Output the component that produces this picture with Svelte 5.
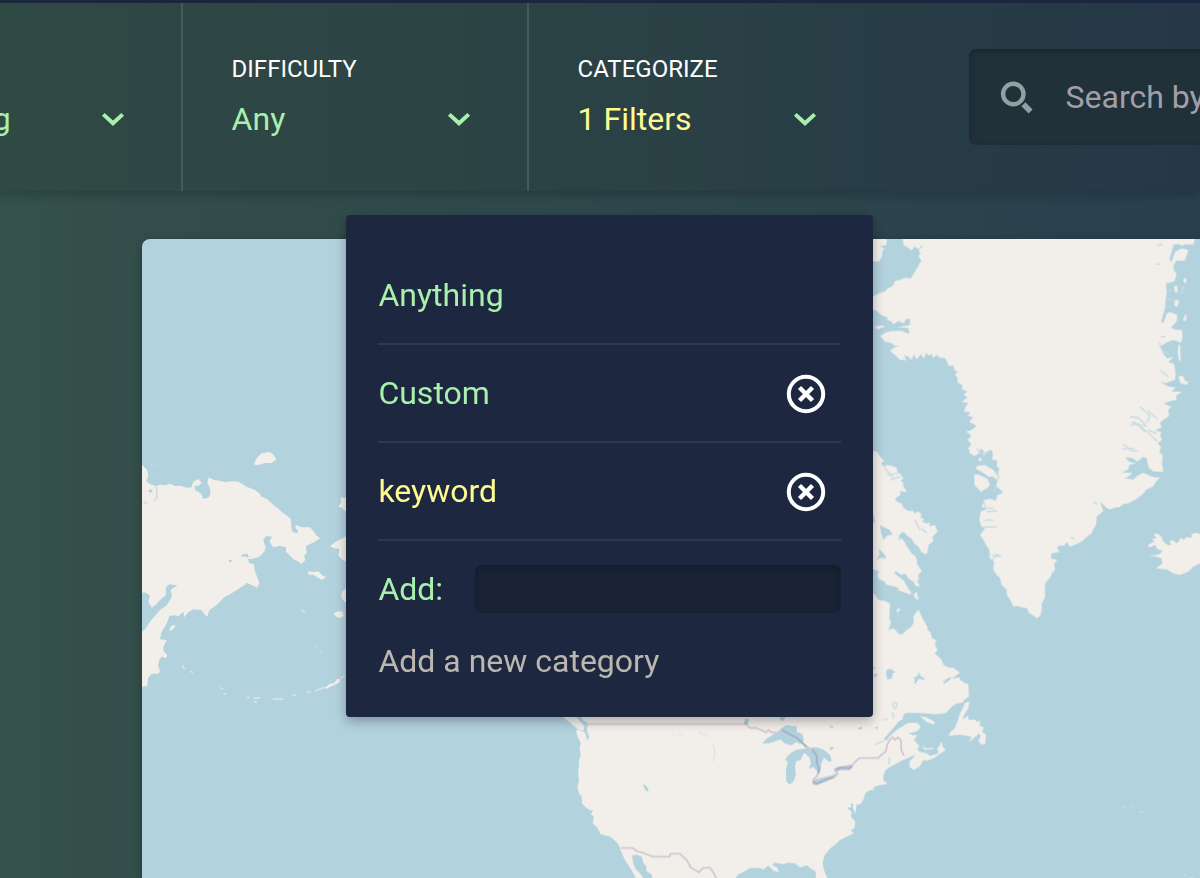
<script>
  const filters = [
    { label: '', value: 'Anything', active: false },
    { label: 'Difficulty', value: 'Any', active: false },
    { label: 'Categorize', value: '1 Filters', active: true }
  ];
  const categories = [
    { name: 'Anything', removable: false, active: false },
    { name: 'Custom', removable: true, active: false },
    { name: 'keyword', removable: true, active: true }
  ];
  let draft = $state('');
</script>

<div class="page">
  <div class="topline"></div>
  <header>
    {#each filters as f}
      <div class="filter">
        <div class="label">{f.label}</div>
        <div class="value" class:active={f.active}>
          <span>{f.value}</span>
          <svg class="chevron" width="24" height="16" viewBox="0 0 24 16"><path d="M2.3 2.4 12 11.3l9.7-8.9" /></svg>
        </div>
      </div>
    {/each}
    <div class="search">
      <svg width="34" height="34" viewBox="0 0 34 34">
        <circle cx="13.3" cy="13" r="10.2" />
        <path d="m23.4 23.3 7.2 7.2" />
      </svg>
      <span>Search by</span>
    </div>
  </header>

  <main>
    <svg class="map" width="1058" height="639" viewBox="142 239 1058 639">
      <rect class="sea" x="142" y="239" width="1058" height="639" />
      <g class="soft">
        <!-- Chukotka, Kamchatka and the Aleutians -->
        <g transform="translate(130 430) scale(.33333)">
          <path class="land" d="M30 98 40 108 52 120 55 140 48 152 60 163 78 168 90 164 105 166 120 161 135 168 150 167 165 172 183 173 190 155 205 147 215 158 205 168 194 167 195 180 212 190 220 207 235 203 242 192 240 175 232 160 236 142 252 150 270 152 285 157 305 154 325 155 350 170 375 180 388 190 395 200 412 208 430 225 445 236 460 250 470 256 483 268 484 290 487 305 500 310 505 303 496 294 498 285 515 292 540 292 553 307 558 315 570 325 557 334 545 340 528 348 530 370 522 378 526 390 515 401 500 392 490 388 478 375 468 365 468 352 450 347 430 352 418 335 426 320 410 318 400 328 402 338 407 350 404 363 395 374 385 382 368 386 354 388 358 400 372 402 374 420 378 432 388 458 382 473 370 467 350 458 345 464 320 480 300 493 285 500 260 525 238 540 232 560 222 551 215 540 190 538 175 546 163 562 160 545 145 559 133 556 118 558 112 575 105 590 95 605 90 628 110 630 100 650 100 662 112 676 108 685 95 680 88 690 84 706 90 722 85 731 65 731 54 744 52 768 30 772V610L45 598 60 575 90 540 110 526 126 500 122 480 142 466 118 463 108 472 107 497 92 508 80 522 65 533 55 515 60 497 48 488 30 487Z" />
          <path class="land" d="M372 100 380 85 395 70 418 66 432 76 439 88 425 99 405 99 390 104 376 105ZM534 424l18 2 14-2 10 12 12 4-12 10-14-8-12-8-14 1zM652 203h-20l2 14-9 12 12 6 8 8h8zM652 314l-12 10-18 8-22 17 14 6 14 2-3 20 16 15h12zM650 472l-14 14-2 14 10 16 8 4zM612 550l12-6 14 1 3 12-12 7-13-6zM117 600l8-13 8-3 3 7-9 8-7 3zM586 774l12-12 14-2 10-14 8 2-2 10-18 8-12 6-10 6z" />
          <path class="faint" d="M157 706l7 12M269 773l11 4M180 723l9 5M281 789l8 5M348 803h10M370 805l20-2M372 814l9 2M428 808l14-2 17 2M488 795l10 1M530 788l12-5M556 782l14-5M570 778l16-7M632 745l12-8M514 540l11 6" />
          <path class="speck" d="M557 647l4 4M570 663l5 3M62 104l5 4M78 106l5 3M470 77l4 2" />
          <path class="water" d="M54 183l8-6 6 7-5 4zM332 380l8-9 14 2 2 12-12-6zM296 389h9v7h-8z" />
          <path class="thinwater" d="M40 216l12 4M72 212l8-8 1-25-6-11" />
        </g>
        <!-- Greenland, Baffin Island, Labrador and Iceland -->
        <g transform="translate(860 230) scale(.33333)">
          <path class="land" d="M128 20 130 45 145 54 155 61 163 50 178 58 184 44 187 50 176 62 181 72 175 78 184 92 172 112 163 127 152 145 135 143 120 150 105 153 98 168 82 176 75 184 60 188 50 194 35 200V238L50 242 65 256 85 263 80 270 95 274 100 283 115 273 133 280 136 268 150 266 150 285 128 289 110 292 145 294 148 312 125 303 95 303 78 307 60 318 75 335 92 338 105 348 120 348 102 352 90 362 108 378 120 390 135 389 142 398 133 376 144 379 154 390 162 374 170 389 183 372 190 386 200 368 205 376 215 372 220 384 230 374 240 384 254 384 263 397 265 408 280 406 283 420 293 425 284 434 292 442 293 458 307 465 306 478 322 484 310 494 322 502 304 516 325 518 317 530 312 546 330 546 324 558 340 561 327 575 350 588 335 600 318 604 334 617 323 630 334 642 325 654 330 670 345 678 356 670 362 655 371 662 371 680 380 665 394 660 399 675 395 688 412 692 410 708 418 716 412 736 400 720 375 705 352 707 346 716 358 722 372 730 385 740 400 740 413 752 408 768 420 778 430 788 412 795 408 812 390 806 372 810 365 830 380 838 362 844 358 870 364 890 375 895 360 915 370 930 378 945 388 960 390 985 402 995 400 1020 410 1035 419 1042 425 1065 440 1080 440 1095 450 1108 460 1130 472 1128 490 1133 500 1134 508 1150 518 1155 530 1165 540 1158 545 1142 545 1120 555 1102 555 1060 572 1040 575 1030 585 1020 583 1000 592 990 572 985 575 970 598 966 590 950 604 946 612 948 620 936 630 950 655 940 668 932 684 918 696 908 700 897 708 885 710 860 730 843 720 815 740 834 750 838 765 832 777 832 790 822 805 820 825 810 846 795 858 780 878 770 890 752 902 742 885 742 870 738 850 728 832 737 820 748 795 745 812 735 815 728 785 727 805 718 808 705 828 700 808 695 795 682 816 684 832 694 849 681 860 685 865 710 872 718 880 724 910 725 906 698 908 678 898 665 903 650 893 640 906 630 900 615 906 608 885 600 905 593 900 578 916 565 928 558 924 540 934 530 910 520 935 512 950 510 948 498 966 485 935 485 947 472 928 470 908 462 945 450 947 430 942 400 925 397 940 380 920 385 910 372 900 350 920 337 940 330 963 338 968 320 965 300 948 300 932 292 950 275 952 255 930 246 920 250 912 276 903 278 908 258 915 235 917 210 920 190 918 160 943 154 950 130 942 122 940 110 948 92 975 92 985 60 965 55 945 66 935 95 928 90 940 45 955 42 966 46 975 43 1000 43 1004 28 1010 20Z" />
          <path class="land" d="M342 733l12 0 16 8 12 4 8 20-10 10-18 10-10-12-8-6zM354 690l4-6 9 2-4 8zM35 20h32l14 10-3 16-18 1 13 10-7 10 1 10-10 17-22 0zM42 289l25-3 10 4-12 3-11 5zM970 150l6-8 3 3-1 14-6-1zM942 168l10 0 1 19-8 0zM968 272l8-19 4 4-2 16zM945 208l12 5-5 18-9-3zM955 345l5 0 2 40-3 14-6-30zM955 440l10-4 8 8 2 10 9-2-2 12-20-3z" />
          <path class="speck" d="M971 168l-8 26" />
          <path class="land" d="M35 662 50 664 60 680 72 693 63 700 78 716 76 705 90 706 110 713 112 725 122 733 130 745 122 752 131 760 128 765 140 785 120 783 122 795 105 805 110 815 125 820 130 833 145 843 160 842 161 850 177 844 185 856 180 862 192 866 187 875 200 880 210 878 208 889 225 885 233 905 217 920 220 933 206 945 202 968 195 973 183 964 175 950 163 941 155 925 145 920 132 908 130 930 138 945 155 970 165 978 172 991 170 1000 186 1024 174 1035 177 1045 172 1054 180 1070 168 1068 160 1055 145 1045 135 1030 125 1035 105 1022 105 1032 130 1050 145 1075 152 1088 142 1090 124 1081 108 1070 80 1065 75 1055 57 1048 52 1035 57 1024 45 1020 35 1015ZM162 1092l8-6 5 20-3 4-10-10zM110 1138l8-4 2 6-8 9zM110 1080l30-8 12 12 0 10-16-6z" />
          <path class="water" d="M60 885l14 8 15 7 9 14-16 2-12 14-6-20zM56 955l20 22 2 10-14-5-14 8 8-16zM129 905l8 5-7 22-8-8-7 10 3-20zM35 835l10 40-10 10z" />
          <path class="land" d="M-50 1070 35 1085 45 1095 55 1110 75 1113 90 1120 88 1170 94 1175 85 1200 98 1195 107 1200 113 1210 125 1214 140 1200 155 1190 161 1175 160 1160 170 1145 175 1138 190 1170 202 1190 203 1200 212 1208 216 1225 228 1230 225 1245 233 1260 224 1270 235 1280 245 1290 250 1305 265 1312 280 1313 300 1328 275 1345 300 1342 300 1350 312 1358 325 1362 327 1400 314 1408 308 1418 290 1420 275 1430 258 1449 225 1453 205 1450 140 1448 130 1455 128 1467 115 1476 95 1500 85 1510 70 1530 80 1531 90 1518 110 1500 140 1481 155 1477 175 1480 182 1492 170 1504 157 1508 143 1507 160 1516 172 1513 162 1530 178 1548 172 1558 178 1565 200 1570 210 1578 235 1570 232 1556 245 1534 248 1550 257 1560 245 1568 220 1585 200 1592 190 1590 180 1608 162 1620 150 1612 148 1595 165 1578 165 1575 130 1590 110 1600 95 1608 78 1618 70 1635 70 1650 82 1662 50 1668 35 1672 45 1680 20 1680 13 1695 10 1710 0 1722 -50 1720Z" />
          <path class="land" d="M316 1418 328 1414 325 1435 312 1455 308 1468 326 1456 324 1470 345 1468 350 1476 362 1472 358 1486 372 1492 366 1505 378 1515 376 1540 366 1544 355 1534 361 1520 358 1510 340 1525 325 1538 335 1520 300 1514 265 1518 272 1504 284 1495 292 1475 300 1450ZM180 1458l20 4 24 14-2 8-22-8zM186 1546l12 9 22-3-2 5-24 3z" />
          <path class="water" d="M78 1330l2-10 12-4 14 12-8 1-2 16-14 3zM160 1343l12-4 4-13 6 13 9 3 3 8-18-4-9 14-6-2 5-8zM250 1355l15-11 10-2-8 10-16 10zM40 1310h5v7h-5zM41 1332h10v7H41zM43 1491h12l-4 8zM0 1490h7v6H0z" />
          <path class="thinwater" d="M98 1424l4-8 8 4-1 12-6 4zM98 1446l2 18M70 1470l12-3M40 1545l30-12M87 1582v22M920 182l15-2M920 208h15M922 232l12-5" />
          <path class="land" d="M1025 915 1008 908 995 912 996 922 978 922 970 930 962 922 953 940 935 930 928 935 935 945 922 945 910 935 905 922 893 910 880 913 890 925 875 925 883 935 865 943 866 953 885 945 893 958 908 962 900 972 868 978 890 980 905 985 907 1000 888 1015 920 1018 940 1030 960 1035 985 1025 1000 1010 1025 998Z" />
          <path class="thinwater" d="M893 47l15-5M888 102l13 1M898 338l8 22 22 15M915 320l-12 0M900 420l25 20M905 458l15 4M840 530l30 28-10 20M810 560l25 3 24 25M862 542l30 25M812 584l28-2M815 577l45 12M790 642l24 20 20 1M786 657l36-2M820 575l42 30 30 30M865 600l25 10M855 605l-15-14M350 655l12 15 27 0M375 835l-3-20M370 834h32M375 870h25M380 845l30-3M365 892l45-2M395 975l30 5M397 990l12-17 15 7M700 815l12 8M632 922l12 5M405 767l-2 20M415 750l-2-30M80 735l34-6M75 715l25 30M90 750l30-10M165 870l16 32M185 895l15 14" />
          <path class="speck" d="M746 1710l4 2M790 1732h10M810 1728h7M836 1746l14-1M986 1852l4 4M970 1933l8 4M990 1945l9-6" />
        </g>
        <!-- United States and northern Mexico -->
        <g transform="translate(550 700) scale(.33333)">
          <path class="land" d="M85 40 100 62 115 70 110 88 118 110 112 120 104 97 90 90 78 90 82 107 92 130 89 145 92 165 87 182 86 205 84 218 87 245 82 258 86 280 95 289 96 310 105 320 118 330 130 332 122 342 132 350 128 370 142 383 152 402 180 410 193 420 205 433 213 453 225 480 240 503 250 520 262 543H287L270 520 257 507 250 490 246 467 260 464 275 470 280 488 290 500 288 512 305 524 310 545H550L565 523 582 515 600 504 632 504 640 509 655 497 672 513 687 516 682 503 666 495 675 488 700 493 715 488 735 490 750 503 770 496 785 507 797 515 798 545H836L822 510 818 488 824 465 840 446 860 430 868 421 890 410 912 400 902 390 913 385 916 365 903 350 905 335 890 322 905 322 901 307 910 299 909 325 916 342 920 312 930 312 940 295 945 280 975 260V40Z" />
          <path class="land" d="M36 48H78L103 80 101 92 85 89 60 68Z" />
          <path class="water" d="M636 131 650 116 666 105 680 98 697 82 712 75 728 78 740 78 740 95 758 103 762 122 750 132 740 126 723 136 703 129 692 118 668 126 655 130ZM705 178 722 159 740 149 755 147 780 143 800 142 823 150 840 165 845 182 838 186 822 172 814 190 812 212 802 216 792 201 776 206 783 190 779 173 762 158 752 180 738 184 735 205 738 222 732 242 720 254 709 245 708 207 714 186ZM788 240 810 234 845 226 857 220 861 226 830 244 798 256 787 252ZM850 211 870 200 900 194 910 201 900 210 870 211 856 216ZM278 253l8 2 10 13-2 7-8-5zM688 50h20l-8 13-10-4zM838 76l12 4 0 5-10-3zM924 84l12-4 0 7-10 1zM838 142l12-1 2 5-10 4zM585 55l14 4-10 18-8-5z" />
          <path class="thinwater pale" d="M368 108l6-2M383 104l12-1M445 95l22 13 12-1M489 135l6 25-5 25" />
          <path class="thinwater" d="M108 90l9 28M103 75l8 12" />
          <path class="border" d="M110 72H588L600 84 617 83 635 91 647 97 656 90 665 97 690 98 700 90 722 104 742 114 762 134 782 148 800 165 801 190 807 207 801 228 789 240 790 250 800 252 820 241 853 231 863 222 855 207 870 202 890 205 905 197 914 187 928 174H985L993 165 1007 155 1012 133 1021 117 1028 112 1035 119 1045 112 1053 122 1054 150 1062 167M212 444H248L260 453 280 459 310 470H358L362 461H390L410 480 422 502 447 517 460 503H480L492 520 500 540" />
          <path class="lakeborder" d="M584 68l8 3M697 91l45 23 28 27M787 148l13 20 1 22 6 17-1 14M790 246l10 5 25-11 28-9M857 209l15-7 25 3 8-8" />
        </g>
      </g>
    </svg>
  </main>

  <div class="menu">
    {#each categories as c}
      <div class="row" class:active={c.active}>
        <span>{c.name}</span>
        {#if c.removable}
          <svg width="40" height="40" viewBox="0 0 40 40">
            <circle cx="20" cy="20" r="17.2" />
            <path d="m13.5 13.5 13 13m0-13-13 13" />
          </svg>
        {/if}
      </div>
    {/each}
    <div class="add">
      <label for="category">Add:</label>
      <input id="category" bind:value={draft} />
    </div>
    <p>Add a new category</p>
  </div>
</div>

<style>
  :global(body) { margin: 0; overflow: hidden; }
  .page {
    position: relative;
    display: flex;
    flex-direction: column;
    width: 1200px;
    height: 878px;
    overflow: hidden;
    box-sizing: border-box;
    font-family: Roboto, sans-serif;
    font-size: 32px;
    color: #a8f0ab;
    background: linear-gradient(90deg, #34534c 0, #344e4a 8%, #2f494c 42%, #2c444c 72%, #28404e 100%);
  }
  .topline { height: 3px; flex: none; background: #1c2840; }
  header {
    position: relative;
    display: flex;
    flex: none;
    height: 188px;
    margin-left: -163px;
    background: linear-gradient(90deg, #304b43 0, #2f4844 20%, #2b4245 55%, #273c45 80%, #263848 100%);
    box-shadow: 0 4px 10px rgba(0, 0, 0, 0.2);
  }
  .filter {
    box-sizing: border-box;
    flex: none;
    width: 346px;
    padding: 48px 56px 0 48.6px;
    border-right: 2px solid #455a5a;
  }
  .filter:nth-child(3) { border-right-color: transparent; }
  .label {
    height: 36px;
    line-height: 36px;
    font-size: 24px;
    text-transform: uppercase;
    color: #fff;
  }
  .value {
    display: flex;
    align-items: center;
    justify-content: space-between;
    height: 48px;
    margin-top: 8px;
    line-height: 48px;
  }
  .value.active span, .row.active { color: #fffb91; }
  .chevron { margin-top: 1px; }
  .chevron path { fill: none; stroke: #a8f0ab; stroke-width: 4; }
  .search {
    display: flex;
    align-items: center;
    box-sizing: border-box;
    flex: none;
    width: 400px;
    height: 96px;
    margin: 46px 0 0 94px;
    padding-left: 31px;
    gap: 31.5px;
    border-radius: 8px;
    background: #20313a;
    box-shadow: inset 0 2px 6px rgba(0, 0, 0, 0.25);
    color: #a29fa8;
  }
  .search svg { margin-top: 1px; fill: none; stroke: #92a0a4; stroke-width: 4.4; }
  .search path { stroke-width: 5.5; }
  main { flex: none; padding: 48px 0 0 142px; }
  .map { display: block; border-radius: 8px 0 0 0; box-shadow: 0 2px 10px rgba(0, 0, 0, 0.22); }
  .sea, .water { fill: #b2d2de; }
  .soft { filter: blur(0.6px); }
  .land { fill: #f2efea; }
  .faint { fill: none; stroke: #d9e2e1; stroke-width: 5; }
  .speck { fill: none; stroke: #c8dce1; stroke-width: 5; }
  .thinwater { fill: none; stroke: #c6dbe0; stroke-width: 4; }
  .thinwater.pale { stroke: #dde6e6; }
  .border { fill: none; stroke: #d5c7d0; stroke-width: 5.5; stroke-linejoin: round; }
  .lakeborder { fill: none; stroke: #a3b3cb; stroke-width: 6; }
  .menu {
    position: absolute;
    left: 346px;
    top: 215px;
    width: 527px;
    height: 502px;
    box-sizing: border-box;
    padding: 32px;
    border-radius: 4px;
    background: #1d2840;
    box-shadow: 0 4px 12px rgba(0, 0, 0, 0.3);
  }
  .row {
    display: flex;
    align-items: center;
    justify-content: space-between;
    box-sizing: border-box;
    height: 98px;
    padding-right: 15px;
    border-bottom: 2px solid #283a55;
  }
  .row span, label, p { padding-left: 0.4px; }
  .row svg { margin-top: 2px; fill: none; stroke: #fff; stroke-width: 4; }
  .row svg path { stroke-width: 4.4; }
  .add { display: flex; align-items: center; justify-content: space-between; height: 48px; margin-top: 24px; }
  input {
    box-sizing: border-box;
    width: 366px;
    height: 48px;
    border: 0;
    border-radius: 8px;
    background: #192335;
    box-shadow: inset 0 2px 6px rgba(0, 0, 0, 0.25);
    color: #fff;
    font: inherit;
  }
  p { margin: 24px 0 0; line-height: 48px; color: #bab7b1; }
</style>
